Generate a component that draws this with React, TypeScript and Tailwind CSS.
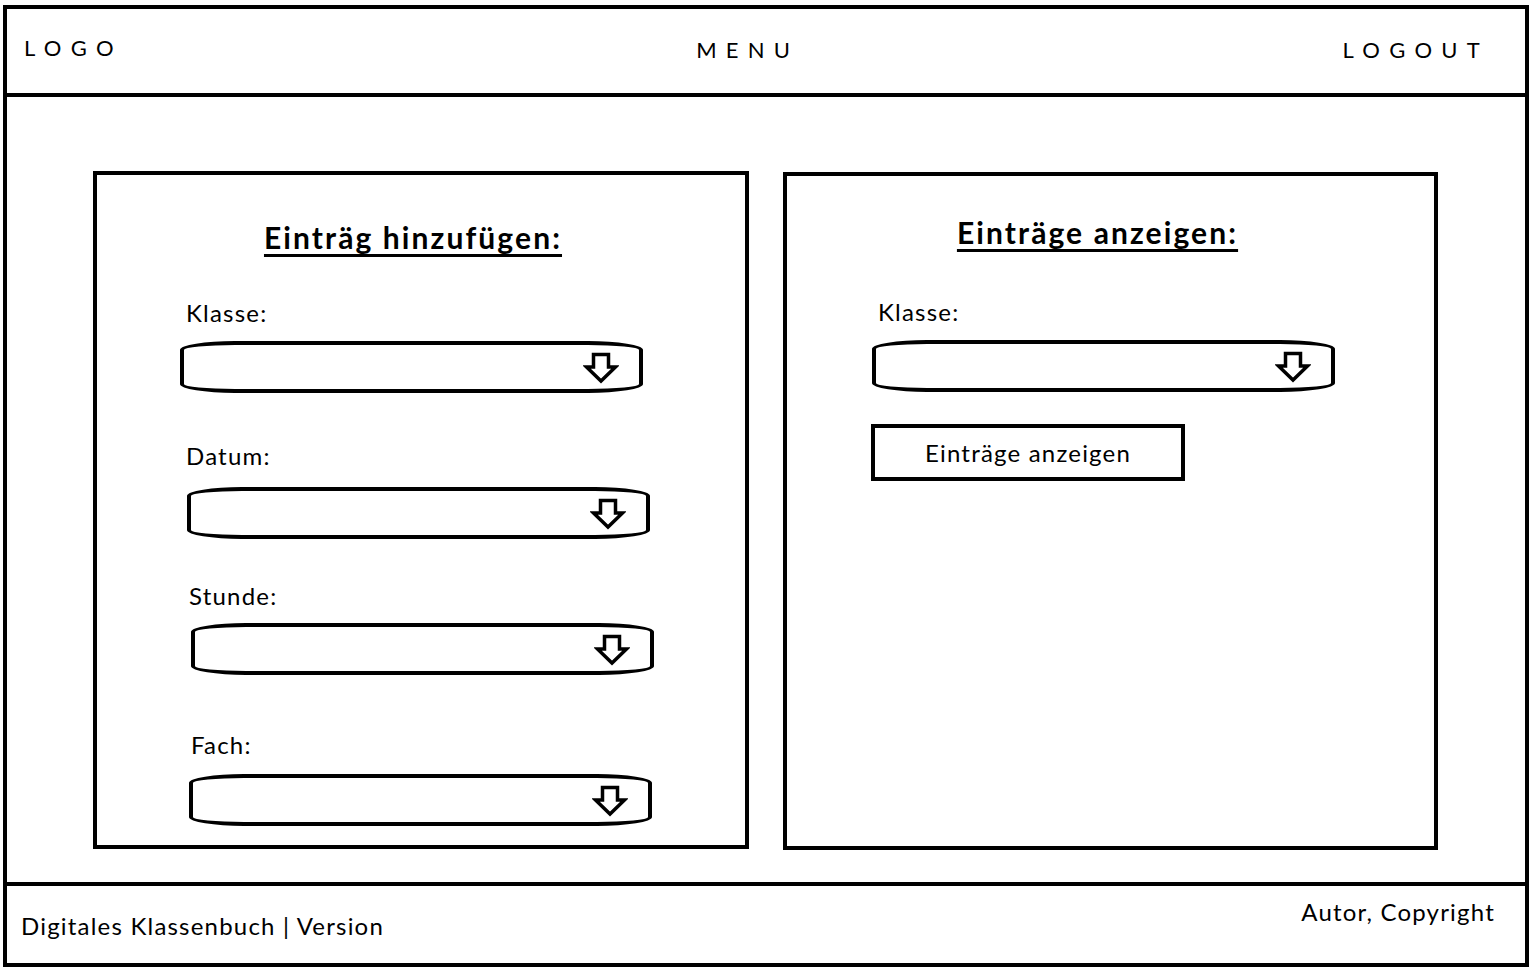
import React from 'react';

const font = { fontFamily: 'Lato, "Open Sans", sans-serif' };

function DownArrow() {
  return (
    <svg width="36" height="34" viewBox="0 0 36 34" className="shrink-0">
      <path
        d="M10.5 4.5 H25.5 V17 H32.5 L18 31 L3.5 17 H10.5 Z"
        fill="none"
        stroke="black"
        strokeWidth="3.5"
        strokeLinejoin="miter"
      />
    </svg>
  );
}

// hand-drawn looking select box
function SelectBox({ className }: { className: string }) {
  return (
    <div
      className={`flex h-[52px] w-[463px] items-center justify-end rounded-[55px/9px] border-4 border-black pr-[20px] ${className}`}
    >
      <DownArrow />
    </div>
  );
}

function Label({ text, className }: { text: string; className: string }) {
  return (
    <div className={`text-[24px] leading-[30px] tracking-[0.05em] text-black ${className}`}>{text}</div>
  );
}

export default function App() {
  return (
    <div className="min-h-screen bg-white" style={font}>
      <div className="ml-[3px] mt-[5px] flex h-[962px] w-[1526px] flex-col border-4 border-black">
        {/* header */}
        <div className="flex h-[84px] shrink-0 items-start text-[22px] leading-[28px] text-black">
          <span className="ml-[17px] mt-[25px] tracking-[0.42em]">LOGO</span>
          <div className="flex-1" />
          <span className="ml-[30px] mt-[27px] tracking-[0.42em]">MENU</span>
          <div className="flex-1" />
          <span className="mr-[36px] mt-[27px] tracking-[0.42em]">LOGOUT</span>
        </div>
        <div className="h-1 shrink-0 bg-black" />

        {/* main */}
        <div className="flex flex-1 items-start gap-[34px] pl-[86px] pt-[74px]">
          {/* left panel */}
          <div className="flex h-[678px] w-[656px] flex-col border-4 border-black">
            <h2 className="mt-[44px] pr-[16px] text-center text-[30px] font-bold leading-[36px] tracking-[0.07em] underline decoration-[3px] underline-offset-[5px]">
              Einträg hinzufügen:
            </h2>
            <Label text="Klasse:" className="ml-[89px] mt-[43px]" />
            <SelectBox className="ml-[83px] mt-[13px]" />
            <Label text="Datum:" className="ml-[89px] mt-[48px]" />
            <SelectBox className="ml-[90px] mt-[16px]" />
            <Label text="Stunde:" className="ml-[92px] mt-[42px]" />
            <SelectBox className="ml-[94px] mt-[12px]" />
            <Label text="Fach:" className="ml-[94px] mt-[55px]" />
            <SelectBox className="ml-[92px] mt-[14px]" />
          </div>

          {/* right panel */}
          <div className="mt-px flex h-[678px] w-[655px] flex-col border-4 border-black">
            <h2 className="mt-[38px] pr-[26px] text-center text-[30px] font-bold leading-[36px] tracking-[0.07em] underline decoration-[3px] underline-offset-[5px]">
              Einträge anzeigen:
            </h2>
            <Label text="Klasse:" className="ml-[91px] mt-[47px]" />
            <SelectBox className="ml-[85px] mt-[13px]" />
            <button className="ml-[84px] mt-[32px] flex h-[57px] w-[314px] items-center justify-center border-4 border-black text-[24px] leading-[30px] tracking-[0.05em]">
              Einträge anzeigen
            </button>
          </div>
        </div>

        {/* footer */}
        <div className="h-1 shrink-0 bg-black" />
        <div className="flex h-[77px] shrink-0 items-start justify-between text-[24px] leading-[30px] tracking-[0.05em] text-black">
          <span className="ml-[14px] mt-[25px]">Digitales Klassenbuch | Version</span>
          <span className="mr-[30px] mt-[11px]">Autor, Copyright</span>
        </div>
      </div>
    </div>
  );
}
